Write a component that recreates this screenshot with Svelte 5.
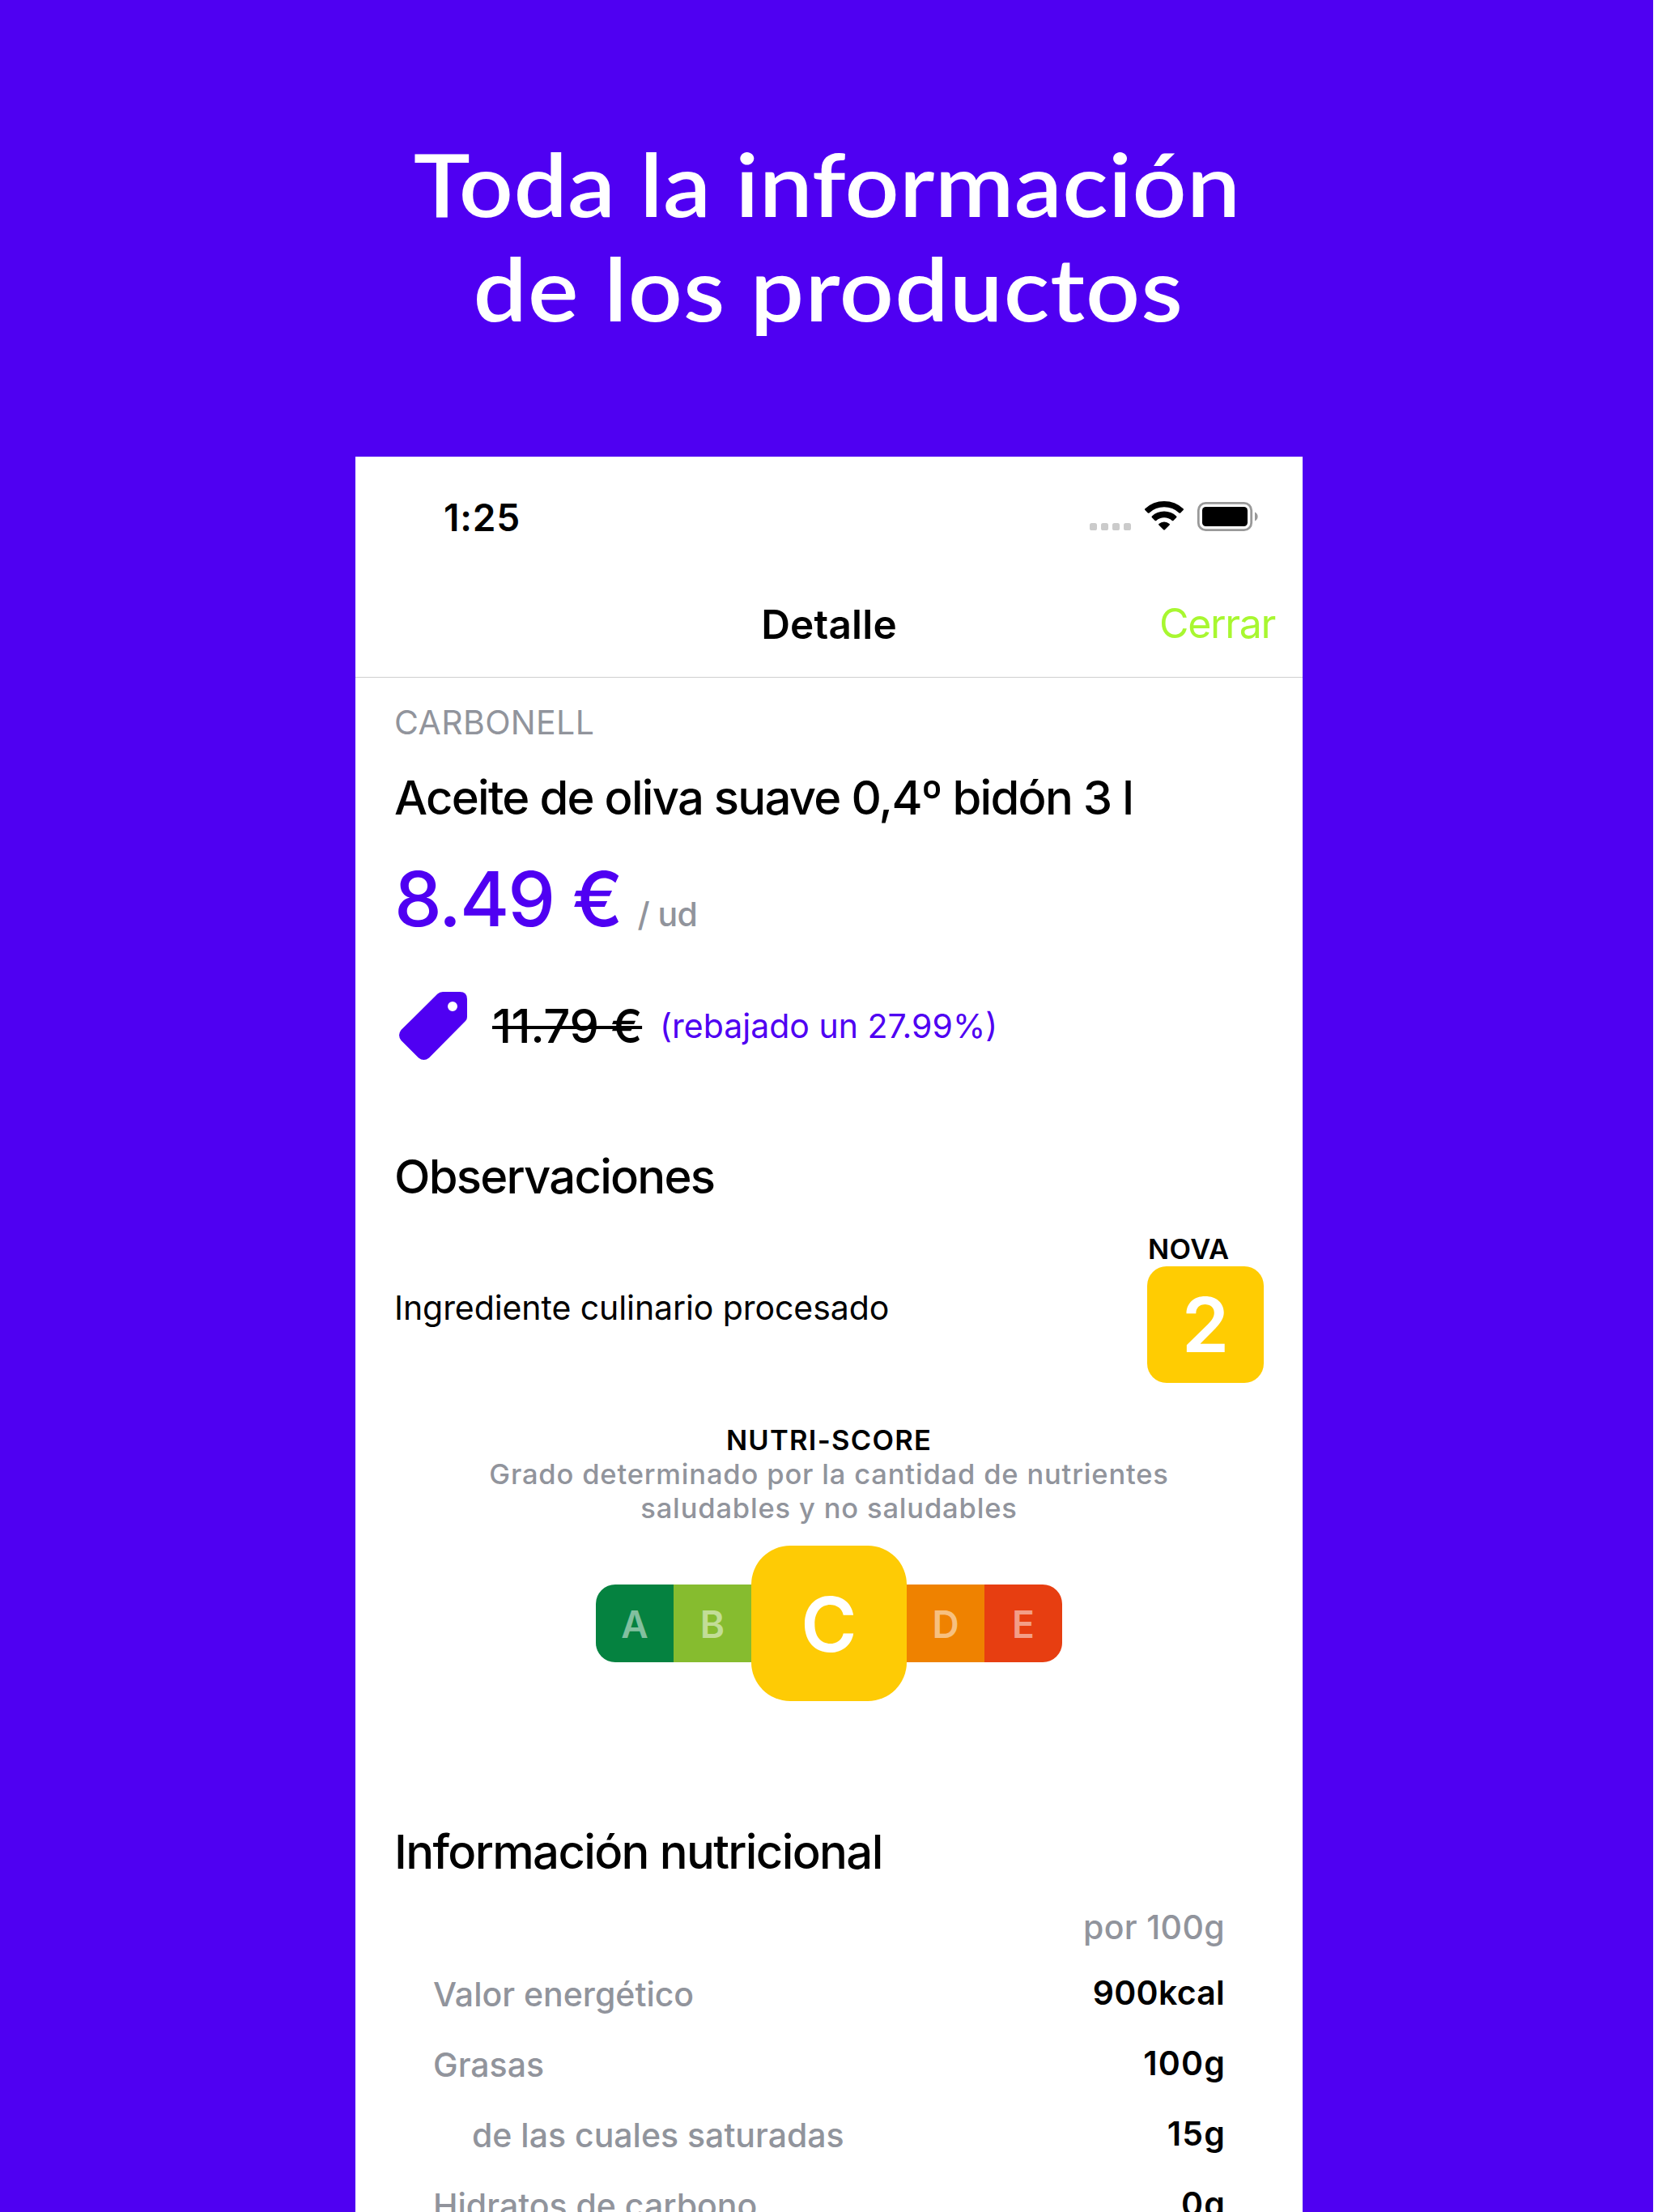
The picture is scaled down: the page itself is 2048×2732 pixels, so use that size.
<script>
  const grades = [
    { letter: 'A', tone: 'a' },
    { letter: 'B', tone: 'b' },
    { letter: 'C', tone: 'c', active: true },
    { letter: 'D', tone: 'd' },
    { letter: 'E', tone: 'e' }
  ];
  const nutrients = [
    { label: 'Valor energético', value: '900kcal', energy: true },
    { label: 'Grasas', value: '100g' },
    { label: 'de las cuales saturadas', value: '15g', nested: true },
    { label: 'Hidratos de carbono', value: '0g' }
  ];
</script>

<div class="poster">
  <h1>
    <span class="line-one">Toda la información</span>
    <span class="line-two">de los productos</span>
  </h1>

  <main class="phone">
    <div class="status">
      <span class="time">1:25</span>
      <svg class="indicators" viewBox="0 0 208 38" aria-hidden="true">
        <g fill="#cbcbcb">
          <rect x="0" y="27" width="9" height="9" rx="2.6" />
          <rect x="14" y="27" width="9" height="9" rx="2.6" />
          <rect x="28" y="27" width="9" height="9" rx="2.6" />
          <rect x="42" y="27" width="9" height="9" rx="2.6" />
        </g>
        <path d="M92 0A35 35 0 0 1 115.600 9.200Q116.500 10.100 115.600 11L112.200 14.400Q111.300 15.200 110.400 14.400A27 27 0 0 0 73.600 14.400Q72.700 15.200 71.800 14.400L68.400 11Q67.500 10.100 68.400 9.200A35 35 0 0 1 92 0Z" />
        <path d="M92 12.600A22.500 22.500 0 0 1 107.100 18.500Q108 19.400 107.100 20.200L103.400 23.900Q102.600 24.600 101.700 23.900A14.500 14.500 0 0 0 82.300 23.900Q81.400 24.600 80.600 23.900L76.900 20.200Q76 19.400 76.900 18.500A22.500 22.500 0 0 1 92 12.600Z" />
        <path d="M92 25.400A10 10 0 0 1 98.600 27.900Q99.400 28.700 98.600 29.500L92.800 35.300Q92 36.100 91.200 35.300L85.400 29.500Q84.600 28.700 85.400 27.900A10 10 0 0 1 92 25.400Z" />
        <rect x="134.300" y="2.300" width="65.400" height="33.400" rx="9" fill="none" stroke="#999" stroke-width="2.800" />
        <rect x="139" y="7" width="56" height="24" rx="4.500" />
        <path d="M204 13.500A6 6 0 0 1 204 24.500Z" fill="#999" />
      </svg>
    </div>

    <header class="nav">
      <h2>Detalle</h2>
      <a class="close" href="#cerrar">Cerrar</a>
    </header>

    <div class="content">
      <p class="brand">CARBONELL</p>
      <h3 class="name">Aceite de oliva suave 0,4º bidón 3 l</h3>
      <p class="price"><strong>8.49 €</strong><span>/ ud</span></p>

      <div class="discount">
        <svg class="tag" viewBox="0 0 84 84" aria-hidden="true">
          <path fill="#4f00f2" fill-rule="evenodd" d="M54 0H75Q84 0 84 9V31Q84 34 82 36L37 81.500Q30.500 86.500 24 81.500L2.500 60Q-2.500 53.500 2.500 47L47.500 2.500Q50 0 54 0ZM66 12a6 6 0 1 0 0 12a6 6 0 1 0 0-12Z" />
        </svg>
        <s>11.79 €</s>
        <span class="cut">(rebajado un 27.99%)</span>
      </div>

      <h3 class="observations">Observaciones</h3>
      <div class="nova">
        <p>Ingrediente culinario procesado</p>
        <div class="nova-badge">
          <span class="caption">NOVA</span>
          <span class="level">2</span>
        </div>
      </div>

      <div class="nutri">
        <p class="nutri-title">NUTRI-SCORE</p>
        <p class="nutri-text">Grado determinado por la cantidad de nutrientes<br />saludables y no saludables</p>
        <div class="scale">
          {#each grades as grade}
            <span class="grade {grade.tone}" class:active={grade.active}>{grade.letter}</span>
          {/each}
        </div>
      </div>

      <h3 class="nutrition">Información nutricional</h3>
      <div class="table">
        <p class="unit">por 100g</p>
        {#each nutrients as row}
          <div class="row">
            <span class="label" class:nested={row.nested}>{row.label}</span>
            <span class="value" class:energy={row.energy}>{row.value}</span>
          </div>
        {/each}
      </div>
    </div>
  </main>
</div>

<style>
  :global(body) { margin: 0; background: #fff; }
  .poster {
    width: 2042px;
    height: 2732px;
    overflow: hidden;
    background: #4f00f2;
    color: #000;
    font-family: Inter, 'Liberation Sans', sans-serif;
  }
  h1, h2, h3, p { margin: 0; font-weight: 500; }
  h1 {
    height: 402px;
    padding: 162px 0 0 1px;
    color: #fff;
    font: 600 107px/129px Lato, sans-serif;
    text-align: center;
    transform: scaleX(1.1);
  }
  h1 span { display: block; }
  .line-one { letter-spacing: 0.3px; }
  .line-two { padding-left: 3px; letter-spacing: 1px; }
  .phone {
    width: 1170px;
    height: 2168px;
    margin-left: 439px;
    overflow: hidden;
    background: #fff;
  }
  .status {
    display: flex;
    justify-content: space-between;
    height: 91px;
    padding: 50px 55px 0 109px;
  }
  .time { font-size: 46px; line-height: 50px; font-weight: 600; letter-spacing: 0.8px; }
  .indicators { width: 208px; height: 38px; margin-top: 5px; }
  .nav {
    display: grid;
    grid-template-columns: 1fr auto 1fr;
    align-items: center;
    height: 131px;
    padding: 0 34px;
    border-bottom: 1px solid #cfcfcf;
  }
  .nav h2 { grid-column: 2; font-size: 49.5px; font-weight: 600; letter-spacing: 0.2px; }
  .close {
    justify-self: end;
    padding-bottom: 2px;
    color: #a8f730;
    font-size: 50px;
    letter-spacing: -1.35px;
    text-decoration: none;
  }
  .content { padding: 30px 48px 0; }
  .brand { color: #91949c; font-size: 41px; line-height: 50px; font-weight: 400; letter-spacing: 0.37px; }
  h3 { font-size: 58px; line-height: 72px; white-space: nowrap; }
  .name { margin-top: 32px; letter-spacing: -1.73px; }
  .price {
    display: flex;
    align-items: baseline;
    gap: 20px;
    height: 112px;
    margin-top: 33px;
    line-height: 112px;
  }
  .price strong { color: #4f00f2; font-size: 93.5px; font-weight: 500; letter-spacing: -2.1px; }
  .price span { color: #91949c; font-size: 41px; letter-spacing: -0.6px; }
  .discount {
    display: flex;
    align-items: center;
    height: 84px;
    margin-top: 59px;
    padding-left: 6px;
  }
  .tag { width: 84px; height: 84px; }
  .discount s {
    margin-left: 31px;
    font-size: 58px;
    font-weight: 500;
    letter-spacing: -0.45px;
    text-decoration-thickness: 4px;
  }
  .cut { margin-left: 22px; color: #4f00f2; font-size: 41px; }
  .observations { margin-top: 108px; letter-spacing: -1.77px; }
  .nova {
    display: flex;
    justify-content: space-between;
    align-items: center;
    height: 187px;
    margin-top: 32px;
  }
  .nova p { font-size: 41px; line-height: 50px; font-weight: 400; letter-spacing: -0.08px; }
  .nova-badge { display: flex; flex-direction: column; width: 144px; }
  .caption { padding-left: 1px; font-size: 34.5px; line-height: 43px; font-weight: 600; letter-spacing: 0.4px; }
  .level {
    height: 144px;
    border-radius: 24px;
    background: #ffcc02;
    color: #fff;
    font-size: 94px;
    line-height: 145px;
    font-weight: 600;
    text-align: center;
  }
  .nutri {
    display: flex;
    flex-direction: column;
    align-items: center;
    margin-top: 50px;
    font-size: 34.5px;
    line-height: 42px;
    text-align: center;
    white-space: nowrap;
  }
  .nutri-title { font-weight: 600; letter-spacing: 1.27px; }
  .nutri-text { color: #91949c; letter-spacing: 0.83px; }
  .scale { display: flex; align-items: center; margin-top: 25px; }
  .grade {
    width: 96px;
    height: 96px;
    color: rgba(255, 255, 255, 0.5);
    font-size: 46px;
    line-height: 98px;
    font-weight: 600;
    text-align: center;
  }
  .a { border-radius: 24px 0 0 24px; background: #058240; }
  .b { background: #86bc2f; }
  .c { background: #fecb05; }
  .d { background: #ef8200; }
  .e { border-radius: 0 24px 24px 0; background: #e73e11; }
  .active {
    width: 192px;
    height: 192px;
    border-radius: 48px;
    color: #fff;
    font-size: 94px;
    line-height: 194px;
  }
  .nutrition { margin-top: 150px; letter-spacing: -1.63px; }
  .table { padding: 32px 48px 0; font-size: 41px; }
  .unit {
    margin-bottom: 13px;
    color: #91949c;
    line-height: 50px;
    letter-spacing: 0.35px;
    text-align: right;
  }
  .row {
    display: flex;
    justify-content: space-between;
    height: 87px;
    line-height: 87px;
  }
  .label { padding-top: 2px; color: #91949c; font-weight: 500; }
  .nested { padding-left: 48px; }
  .value { margin-right: -1px; font-weight: 600; letter-spacing: 1.2px; }
  .energy { margin-right: 0; letter-spacing: 0.27px; }
</style>
